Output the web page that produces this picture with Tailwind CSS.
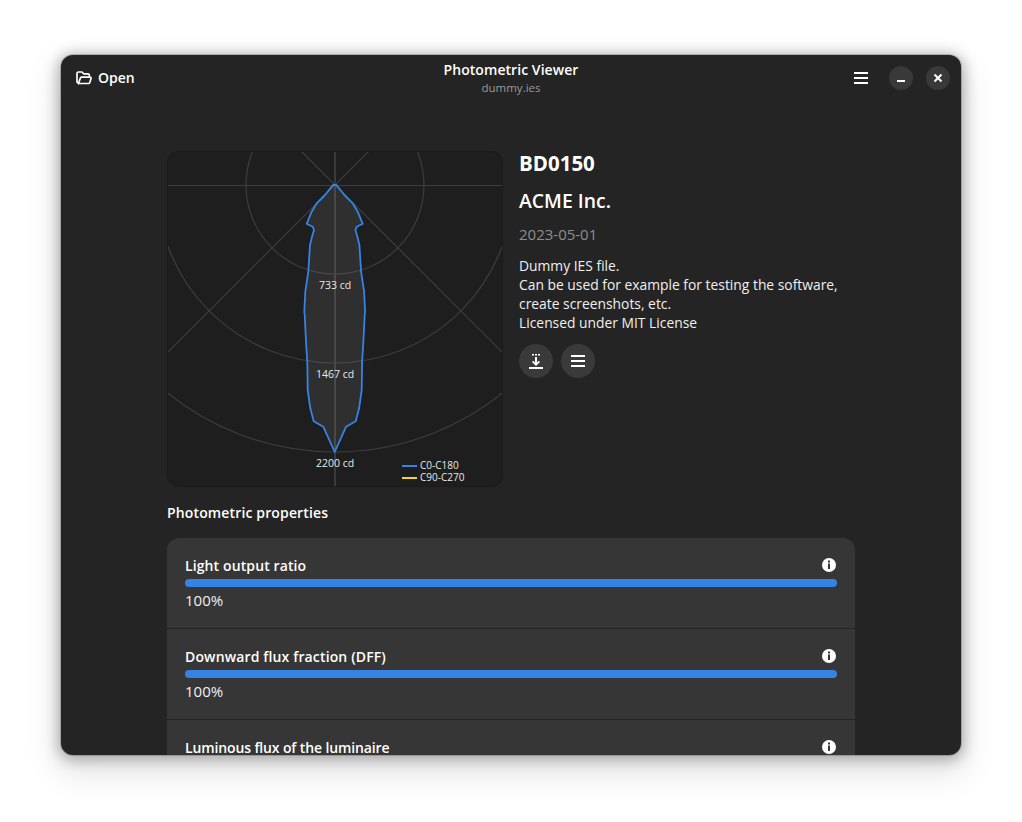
<!DOCTYPE html>
<html lang="en">
<head>
  <meta charset="UTF-8" />
  <title>Photometric Viewer</title>
  <script src="https://cdn.jsdelivr.net/npm/@tailwindcss/browser@4"></script>
</head>
<body class="bg-white h-[822px] overflow-hidden font-['Open_Sans',sans-serif]">
  <div class="pt-[55px] pl-[61px]">
    <!-- Window -->
    <div class="relative w-[900px] h-[700px] bg-[#242424] rounded-[12px] overflow-hidden text-white shadow-[0_2px_14px_3px_rgba(0,0,0,0.28),0_14px_30px_6px_rgba(0,0,0,0.10),0_0_0_1px_rgba(0,0,0,0.18)]">

      <!-- Header bar -->
      <header class="h-[46px] flex items-center justify-between pl-[15px] pr-[11px]">
        <button class="flex items-center gap-[6px] text-[14px] font-semibold">
          <svg width="16" height="16" viewBox="0 0 16 16" fill="none" stroke="white" stroke-width="1.7" stroke-linejoin="round">
            <path d="M2.600 13.200 1 12V3.600C1 2.700 1.700 2 2.600 2H6l1.600 1.800h4.200c.9 0 1.600.7 1.600 1.600V7" />
            <path d="M2.400 13.600 4.400 8c.2-.6.7-.9 1.300-.9h8.200c.8 0 1.300.7 1.100 1.400l-1.200 4c-.2.6-.7 1-1.300 1H2.400Z" />
          </svg>
          <span class="-mt-[2px]">Open</span>
        </button>
        <div class="absolute left-0 right-0 top-[5px] flex flex-col items-center pointer-events-none">
          <div class="text-[14px] font-semibold leading-[20px] tracking-[0.06px]">Photometric Viewer</div>
          <div class="text-[11.500px] leading-[15px] text-[#9a9a9a]">dummy.ies</div>
        </div>
        <div class="flex items-center">
          <svg width="16" height="16" viewBox="0 0 16 16" fill="white" class="mr-[20px]">
            <rect x="1" y="2" width="14" height="2" />
            <rect x="1" y="7" width="14" height="2" />
            <rect x="1" y="12" width="14" height="2" />
          </svg>
          <span class="w-[24px] h-[24px] rounded-full bg-[#393939] flex items-center justify-center mr-[13px]">
            <svg width="16" height="16" viewBox="0 0 16 16" fill="white"><rect x="4" y="10" width="8" height="2" /></svg>
          </span>
          <span class="w-[24px] h-[24px] rounded-full bg-[#393939] flex items-center justify-center">
            <svg width="16" height="16" viewBox="0 0 16 16" stroke="white" stroke-width="2"><path d="M4.500 4.500l7 7M11.500 4.500l-7 7" /></svg>
          </span>
        </div>
      </header>

      <!-- Content -->
      <main class="w-[688px] ml-[106px] pt-[50px]">
        <div class="flex gap-[16px]">
          <!-- Diagram: origin at (168,34), rings every 89px -->
          <svg width="336" height="336" viewBox="0 0 336 336" class="rounded-[12px] bg-[#1e1e1e] outline outline-1 -outline-offset-1 outline-[#1a1a1a] shrink-0">
            <g fill="none" stroke="#3d3d3d" stroke-width="1.200">
              <circle cx="168" cy="34" r="89" />
              <circle cx="168" cy="34" r="178" />
              <circle cx="168" cy="34" r="267" />
              <path d="M0 34.500H336" />
              <path d="M-134 -268L470 336M470 -268L-134 336" />
            </g>
            <path d="M168 0V336" stroke="#3a3a3a" stroke-width="2" />
            <path fill="rgba(255,255,255,0.08)" stroke="#3584e4" stroke-width="1.800" stroke-linejoin="round"
              d="M166 34 L158 44 L149.700 52.300 L144.700 60.700 L139.700 72.800 L145.700 75.700 L147 79 L145 85.700 L143 94 L141.300 120.700 L138.300 140.700 L137.300 160.700 L137.700 164 L139 190.700 L140.300 210.700 L140.700 239 L143.300 257.300 L146.700 270.300 L156.300 275.700 L167.700 301 L179.100 275.700 L188.700 270.300 L192.100 257.300 L194.700 239 L195.100 210.700 L196.400 190.700 L197.700 164 L198.100 160.700 L197.100 140.700 L194.100 120.700 L192.400 94 L190.400 85.700 L188.400 79 L189.700 75.700 L195.700 72.800 L190.700 60.700 L185.700 52.300 L177.400 44 L169.400 34 Z" />
            <g fill="#e8e8e8" font-size="10.500" text-anchor="middle">
              <text x="168" y="138">733 cd</text>
              <text x="168" y="227">1467 cd</text>
              <text x="168" y="316">2200 cd</text>
            </g>
            <path d="M235 315H250" stroke="#3584e4" stroke-width="2" />
            <path d="M235 327H250" stroke="#f6d32d" stroke-width="2" />
            <g fill="#e8e8e8" font-size="10">
              <text x="253" y="318">C0-C180</text>
              <text x="253" y="330">C90-C270</text>
            </g>
          </svg>

          <!-- Luminaire details -->
          <div>
            <h1 class="text-[20.500px] font-bold leading-[27px] -mt-[1px]">BD0150</h1>
            <h2 class="text-[19.400px] font-semibold leading-[26px] mt-[11px]">ACME Inc.</h2>
            <p class="text-[15px] leading-[20px] text-[#8e8e8e] mt-[10px]">2023-05-01</p>
            <p class="text-[13.850px] leading-[19px] text-[#f0f0f0] mt-[12px]">Dummy IES file.<br />Can be used for example for testing the software,<br />create screenshots, etc.<br />Licensed under MIT License</p>
            <div class="flex gap-[8px] mt-[12px]">
              <button class="w-[34px] h-[34px] rounded-full bg-[#3a3a3a] flex items-center justify-center">
                <svg width="16" height="16" viewBox="0 0 16 16" fill="white">
                  <rect x="4" y="1" width="2" height="1.500" /><rect x="7" y="1" width="2" height="1.500" /><rect x="10" y="1" width="2" height="1.500" />
                  <path d="M4 9l1.200-1.200L7 9.600V4h2v5.600l1.800-1.800L12 9l-4 4Z" />
                  <rect x="1" y="14" width="14" height="2" />
                </svg>
              </button>
              <button class="w-[34px] h-[34px] rounded-full bg-[#3a3a3a] flex items-center justify-center">
                <svg width="16" height="16" viewBox="0 0 16 16" fill="white">
                  <rect x="1" y="2" width="14" height="2" />
                  <rect x="1" y="7" width="14" height="2" />
                  <rect x="1" y="12" width="14" height="2" />
                </svg>
              </button>
            </div>
          </div>
        </div>

        <h3 class="text-[14px] font-semibold leading-[20px] tracking-[0.14px] mt-[16px]">Photometric properties</h3>

        <!-- Properties list -->
        <div class="mt-[15px] rounded-[12px] bg-[#363636] divide-y divide-[#242424]">
          <div class="h-[91px] px-[18px] pt-[18px]">
            <div class="flex items-center justify-between h-[20px]">
              <span class="text-[14px] font-semibold tracking-[0.11px] -mt-[2px]">Light output ratio</span>
              <svg width="16" height="16" viewBox="0 0 16 16" class="-mt-[2px]"><circle cx="8" cy="8" r="7" fill="white" /><rect x="7" y="6.500" width="2" height="5.500" fill="#363636" /><rect x="7" y="3.500" width="2" height="2" fill="#363636" /></svg>
            </div>
            <div class="h-[8px] rounded-full bg-[#3584e4] mt-[3px]"></div>
            <p class="text-[15px] leading-[20px] text-[#f0f0f0] mt-[3px]">100%</p>
          </div>
          <div class="h-[91px] px-[18px] pt-[18px]">
            <div class="flex items-center justify-between h-[20px]">
              <span class="text-[14px] font-semibold tracking-[0.14px] -mt-[2px]">Downward flux fraction (DFF)</span>
              <svg width="16" height="16" viewBox="0 0 16 16" class="-mt-[2px]"><circle cx="8" cy="8" r="7" fill="white" /><rect x="7" y="6.500" width="2" height="5.500" fill="#363636" /><rect x="7" y="3.500" width="2" height="2" fill="#363636" /></svg>
            </div>
            <div class="h-[8px] rounded-full bg-[#3584e4] mt-[3px]"></div>
            <p class="text-[15px] leading-[20px] text-[#f0f0f0] mt-[3px]">100%</p>
          </div>
          <div class="h-[91px] px-[18px] pt-[18px]">
            <div class="flex items-center justify-between h-[20px]">
              <span class="text-[14px] font-semibold tracking-[-0.13px] -mt-[2px]">Luminous flux of the luminaire</span>
              <svg width="16" height="16" viewBox="0 0 16 16" class="-mt-[2px]"><circle cx="8" cy="8" r="7" fill="white" /><rect x="7" y="6.500" width="2" height="5.500" fill="#363636" /><rect x="7" y="3.500" width="2" height="2" fill="#363636" /></svg>
            </div>
          </div>
        </div>
      </main>
    </div>
  </div>
</body>
</html>
